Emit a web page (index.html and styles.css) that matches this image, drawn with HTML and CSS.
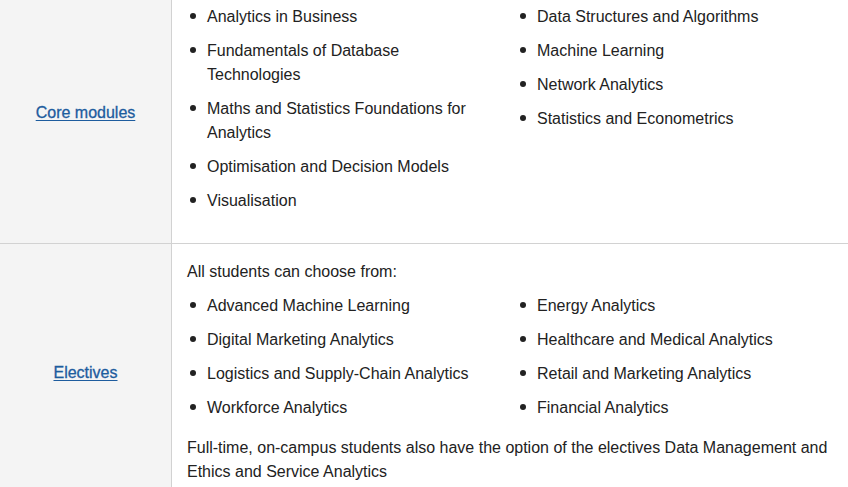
FILE: index.html
```html
<!DOCTYPE html>
<html lang="en">
<head>
<meta charset="utf-8">
<link rel="stylesheet" href="styles.css">
</head>
<body>
<table class="modules">
  <tr class="row row-first">
    <th class="label"><a href="#">Core modules</a></th>
    <td class="content">
      <div class="cols">
        <ul class="list">
          <li>Analytics in Business</li>
          <li>Fundamentals of Database Technologies</li>
          <li>Maths and Statistics Foundations for Analytics</li>
          <li>Optimisation and Decision Models</li>
          <li>Visualisation</li>
        </ul>
        <ul class="list">
          <li>Data Structures and Algorithms</li>
          <li>Machine Learning</li>
          <li>Network Analytics</li>
          <li>Statistics and Econometrics</li>
        </ul>
      </div>
    </td>
  </tr>
  <tr class="row">
    <th class="label"><a href="#">Electives</a></th>
    <td class="content">
      <p class="intro">All students can choose from:</p>
      <div class="cols">
        <ul class="list">
          <li>Advanced Machine Learning</li>
          <li>Digital Marketing Analytics</li>
          <li>Logistics and Supply-Chain Analytics</li>
          <li>Workforce Analytics</li>
        </ul>
        <ul class="list">
          <li>Energy Analytics</li>
          <li>Healthcare and Medical Analytics</li>
          <li>Retail and Marketing Analytics</li>
          <li>Financial Analytics</li>
        </ul>
      </div>
      <p class="note">Full-time, on-campus students also have the option of the electives Data Management and Ethics and Service Analytics</p>
    </td>
  </tr>
</table>
</body>
</html>
```
FILE: styles.css
```css
html, body {
  margin: 0;
  padding: 0;
  background: #fff;
}
body {
  font-family: "Liberation Sans", Arial, sans-serif;
  font-size: 16px;
  line-height: 24px;
  color: #222;
  overflow: hidden;
}
.modules {
  width: 848px;
  border-collapse: collapse;
  margin-top: -18px;
}
.row + .row {
  border-top: 1px solid #d2d2d2;
}
.label {
  width: 171px;
  background: #f4f4f4;
  border-right: 1px solid #d2d2d2;
  text-align: center;
  vertical-align: middle;
  font-weight: normal;
  padding: 0;
}
.label a {
  color: #1d5c9e;
  text-decoration: underline;
  text-underline-offset: 2px;
  -webkit-text-stroke: 0.3px #1d5c9e;
}
.content {
  vertical-align: top;
  padding: 16px 15px 18px 15px;
}
.row-first .content {
  padding-top: 16px;
  padding-bottom: 20px;
}
.cols {
  display: grid;
  grid-template-columns: 330px 1fr;
}
.list {
  margin: 0;
  padding: 0 0 0 20px;
  list-style: none;
}
.list li {
  margin-bottom: 10px;
  max-width: 275px;
}
.list li::before {
  content: "";
  display: inline-block;
  width: 6px;
  height: 6px;
  border-radius: 50%;
  background: #222;
  margin-left: -17px;
  margin-right: 11px;
  vertical-align: 3px;
}
.row-first .cols {
  padding-top: 7px;
}
.intro {
  margin: 0 0 10px 0;
}
.note {
  margin: 6px 0 0 0;
}
```
